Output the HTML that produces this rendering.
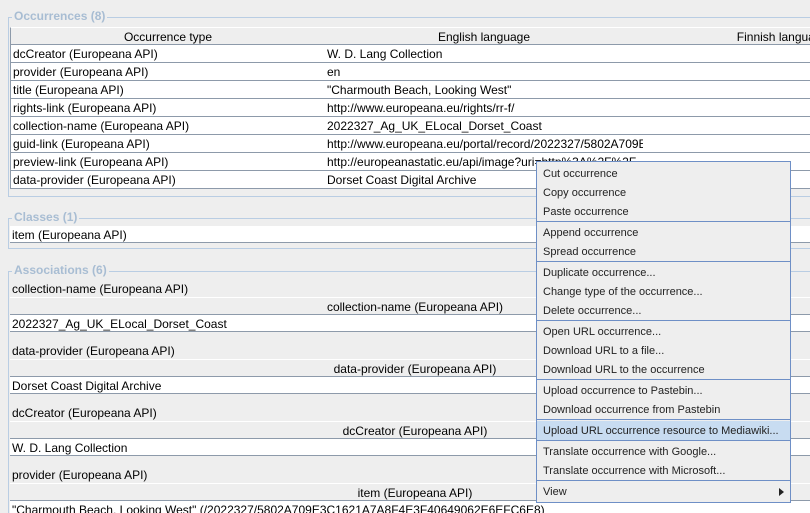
<!DOCTYPE html>
<html style="overflow:hidden;width:810px;height:513px"><head><meta charset="utf-8"><style>
*{margin:0;padding:0;box-sizing:border-box}
body{width:810px;height:513px;overflow:hidden;background:#eeeeee;font-family:"Liberation Sans",Arial,sans-serif;font-size:12px;color:#000;position:relative}
.a{position:absolute;white-space:nowrap}
.gt{color:#a8bdd3;font-weight:bold;font-size:12px;background:#eeeeee;padding:0 2px}
.frame{position:absolute;border:1px solid #b9cde3;border-right:none}
.cell{position:absolute;height:18px;line-height:19px;padding-left:2px;border-right:1px solid #8d9aaa;border-bottom:1px solid #8d9aaa;background:#fff;overflow:hidden;white-space:nowrap}
.hd{position:absolute;height:18px;line-height:18px;text-align:center;background:#eeeeee;border-right:1px solid #8d9aaa;border-bottom:1px solid #8d9aaa;border-top:1px solid #fff;white-space:nowrap}
.menu{position:absolute;left:536px;top:161px;width:255px;height:342px;background:#eeeeee;border:1px solid #6e8fc6;font-size:11px;color:#222}
.mi{height:19px;line-height:21px;padding-left:6px}
.sep{height:2px;border-top:1px solid #6e8fc6;background:#eeeeee}
.hl{background:#c8dcf1}
</style></head><body>
<div class="frame" style="left:8px;top:17px;width:810px;height:180px"></div>
<div class="a gt" style="left:12px;top:9px">Occurrences (8)</div>
<div class="hd" style="left:10px;top:27px;width:316px;border-left:1px solid #8d9aaa">Occurrence type</div>
<div class="hd" style="left:325px;top:27px;width:319px">English language</div>
<div class="hd" style="left:643px;top:27px;width:280px">Finnish language</div>
<div id="rows"></div>

<div class="frame" style="left:8px;top:218px;width:810px;height:31px"></div>
<div class="a gt" style="left:12px;top:210px">Classes (1)</div>
<div class="cell" style="left:10px;top:226px;width:810px;height:17px;border-right:none;border-bottom:1px solid #8d9aaa">item (Europeana API)</div>

<div class="frame" style="left:8px;top:271px;width:810px;height:250px"></div>
<div class="a gt" style="left:12px;top:263px">Associations (6)</div>
<div id="assoc"></div>

<div class="menu">
<div style="height:2px"></div>
<div class="mi">Cut occurrence</div>
<div class="mi">Copy occurrence</div>
<div class="mi">Paste occurrence</div>
<div class="sep"></div>
<div class="mi">Append occurrence</div>
<div class="mi">Spread occurrence</div>
<div class="sep"></div>
<div class="mi">Duplicate occurrence...</div>
<div class="mi">Change type of the occurrence...</div>
<div class="mi">Delete occurrence...</div>
<div class="sep"></div>
<div class="mi">Open URL occurrence...</div>
<div class="mi">Download URL to a file...</div>
<div class="mi">Download URL to the occurrence</div>
<div class="sep"></div>
<div class="mi">Upload occurrence to Pastebin...</div>
<div class="mi">Download occurrence from Pastebin</div>
<div class="sep"></div>
<div class="mi hl">Upload URL occurrence resource to Mediawiki...</div>
<div class="sep"></div>
<div class="mi">Translate occurrence with Google...</div>
<div class="mi">Translate occurrence with Microsoft...</div>
<div class="sep"></div>
<div class="mi" style="position:relative">View<span style="position:absolute;right:6px;top:6px;width:0;height:0;border-left:5px solid #222;border-top:4px solid transparent;border-bottom:4px solid transparent"></span></div>
</div>

<script>
var r=[["dcCreator (Europeana API)","W. D. Lang Collection"],["provider (Europeana API)","en"],["title (Europeana API)","\"Charmouth Beach, Looking West\""],["rights-link (Europeana API)","http://www.europeana.eu/rights/rr-f/"],["collection-name (Europeana API)","2022327_Ag_UK_ELocal_Dorset_Coast"],["guid-link (Europeana API)","http://www.europeana.eu/portal/record/2022327/5802A709E3C1621A"],["preview-link (Europeana API)","http://europeanastatic.eu/api/image?uri=http%3A%2F%2F"],["data-provider (Europeana API)","Dorset Coast Digital Archive"]];
var h="";r.forEach(function(x,i){var t=45+i*18;
h+='<div class="cell" style="left:10px;top:'+t+'px;width:316px;border-left:1px solid #8d9aaa">'+x[0]+'</div>';
h+='<div class="cell" style="left:325px;top:'+t+'px;width:319px">'+x[1]+'</div>';
h+='<div class="cell" style="left:643px;top:'+t+'px;width:280px"></div>';});
document.getElementById("rows").innerHTML=h;
var a=[["collection-name (Europeana API)","collection-name (Europeana API)","2022327_Ag_UK_ELocal_Dorset_Coast"],["data-provider (Europeana API)","data-provider (Europeana API)","Dorset Coast Digital Archive"],["dcCreator (Europeana API)","dcCreator (Europeana API)","W. D. Lang Collection"],["provider (Europeana API)","item (Europeana API)","\"Charmouth Beach, Looking West\" (/2022327/5802A709E3C1621A7A8F4E3F40649062E6EFC6E8)"]];
h="";a.forEach(function(x,i){var t=280+i*62;
h+='<div class="a" style="left:12px;top:'+(t+2)+'px">'+x[0]+'</div>';
h+='<div class="hd" style="left:10px;top:'+(t+17)+'px;width:810px;border-right:none">'+x[1]+'</div>';
h+='<div class="cell" style="left:10px;top:'+(t+35)+'px;width:810px;height:17px;line-height:18px;border-right:none">'+x[2]+'</div>';});
document.getElementById("assoc").innerHTML=h;
</script>
</body></html>
